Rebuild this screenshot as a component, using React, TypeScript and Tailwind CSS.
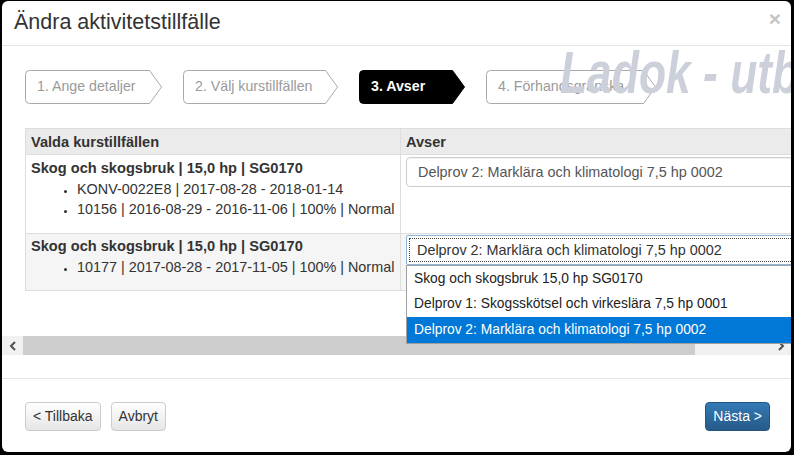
import React from "react";

const font = { fontFamily: '"Liberation Sans", Arial, sans-serif' };

interface StepProps {
  label: string;
  width: number;
  active?: boolean;
}

function Step({ label, width, active }: StepProps) {
  const h = 34;
  const d = `M4.5,0.5 H${width - 12.5} L${width - 0.5},${h / 2} L${width - 12.5},${h - 0.5} H4.5 Q0.5,${h - 0.5} 0.5,${h - 4.5} V4.5 Q0.5,0.5 4.5,0.5 Z`;
  return (
    <div className="relative h-[34px] flex items-center pl-[12px]" style={{ width }}>
      <svg className="absolute inset-0" width={width} height={h}>
        <path d={d} fill={active ? "#000" : "#fff"} stroke={active ? "#000" : "#a9a9a9"} strokeWidth="1" />
      </svg>
      <span className={active ? "relative text-[14.2px] font-bold text-white" : "relative text-[14.2px] text-[#9a9a9a]"}>{label}</span>
    </div>
  );
}

function Btn({ children, primary }: { children: React.ReactNode; primary?: boolean }) {
  if (primary) {
    return (
      <button className="h-[29px] px-[7px] rounded-[4px] border border-[#245580] bg-gradient-to-b from-[#337ab7] to-[#265a88] text-white text-[14px]">
        {children}
      </button>
    );
  }
  return (
    <button className="h-[29px] px-[7px] rounded-[4px] border border-[#ccc] bg-gradient-to-b from-white to-[#e6e6e6] text-[#333] text-[14px]">
      {children}
    </button>
  );
}

export default function App() {
  return (
    <div className="w-[794px] h-[455px] bg-black pt-[1px] pl-[2px] pr-[3px] pb-[3px]" style={font}>
      <div className="relative w-full h-[451px] bg-white rounded-[6px] overflow-hidden flex flex-col text-[#333]">
        {/* header */}
        <div className="h-[45px] shrink-0 border-b border-[#e5e5e5] flex items-center justify-between pl-[12px] pr-[10px]">
          <h4 className="text-[21.5px] leading-none text-[#333]">Ändra aktivitetstillfälle</h4>
          <span className="text-[21px] font-bold text-[#c4c4c4] leading-none -mt-[9px]">×</span>
        </div>

        {/* body */}
        <div className="relative shrink-0">
          <div className="absolute left-[558px] top-[-3px] text-[60px] leading-none font-bold italic text-[#cbd0da] whitespace-nowrap origin-left scale-x-[0.74] z-10 pointer-events-none">
            Ladok - utb
          </div>

          <div className="flex items-center pl-[23px] pt-[24px] gap-[21px]">
            <Step label="1. Ange detaljer" width={137} />
            <Step label="2. Välj kurstillfällen" width={155} />
            <Step label="3. Avser" width={106} active />
            <Step label="4. Förhandsgranska" width={170} />
          </div>

          {/* table */}
          <div className="ml-[23px] mt-[24px] w-[920px] text-[14.4px] leading-[20.5px]">
            <div className="flex h-[26px] bg-[#ebebeb] border-t border-l border-[#ddd] font-bold text-[14.6px]">
              <div className="w-[375px] px-[5px] pt-[3px] border-r border-[#ddd]">Valda kurstillfällen</div>
              <div className="flex-1 px-[5px] pt-[3px]">Avser</div>
            </div>

            <div className="flex h-[79px] border-t border-l border-[#ddd] bg-white">
              <div className="w-[375px] px-[5px] pt-[3px] border-r border-[#ddd]">
                <div className="font-bold text-[14.6px]">Skog och skogsbruk | 15,0 hp | SG0170</div>
                <ul className="list-disc pl-[46px] marker:text-[11px]">
                  <li>KONV-0022E8 | 2017-08-28 - 2018-01-14</li>
                  <li>10156 | 2016-08-29 - 2016-11-06 | 100% | Normal</li>
                </ul>
              </div>
              <div className="flex-1 px-[5px] pt-[2px]">
                <div className="h-[30px] border border-[#ccc] rounded-[4px] flex items-center pl-[11px] text-[#555] shadow-[inset_0_1px_1px_rgba(0,0,0,0.05)]">
                  Delprov 2: Marklära och klimatologi 7,5 hp 0002
                </div>
              </div>
            </div>

            <div className="flex h-[58px] border-t border-b border-l border-[#ddd] bg-[#f5f5f5]">
              <div className="w-[375px] px-[5px] pt-[2px] border-r border-[#ddd]">
                <div className="font-bold text-[14.6px]">Skog och skogsbruk | 15,0 hp | SG0170</div>
                <ul className="list-disc pl-[46px] marker:text-[11px]">
                  <li>10177 | 2017-08-28 - 2017-11-05 | 100% | Normal</li>
                </ul>
              </div>
              <div className="relative flex-1 px-[5px] pt-[1px]">
                <div className="h-[30px] border border-[#8fb6d8] rounded-[2px] bg-white flex items-center px-[2px]">
                  <div className="h-[24px] flex-1 border border-dotted border-[#444] flex items-center pl-[7px] text-[#333]">
                    Delprov 2: Marklära och klimatologi 7,5 hp 0002
                  </div>
                </div>
                <div className="absolute left-[5px] right-[5px] top-[31px] z-20 bg-white border border-[#a0a0a0] text-[13.8px] text-[#222]">
                  <div className="h-[26px] flex items-center pl-[7px]">Skog och skogsbruk 15,0 hp SG0170</div>
                  <div className="h-[25px] flex items-center pl-[7px]">Delprov 1: Skogsskötsel och virkeslära 7,5 hp 0001</div>
                  <div className="h-[26px] flex items-center pl-[7px] bg-[#0078d7] text-white">Delprov 2: Marklära och klimatologi 7,5 hp 0002</div>
                </div>
              </div>
            </div>
          </div>

          {/* horizontal scrollbar */}
          <div className="mt-[45px] h-[19px] flex bg-[#f1f1f1]">
            <div className="w-[21px] flex items-center justify-center">
              <svg width="8" height="10" viewBox="0 0 8 10">
                <path d="M6 1 L2 5 L6 9" fill="none" stroke="#505050" strokeWidth="2" />
              </svg>
            </div>
            <div className="w-[672px] bg-[#cdcdcd]" />
            <div className="flex-1" />
            <div className="w-[20px] flex items-center justify-center">
              <svg width="8" height="10" viewBox="0 0 8 10">
                <path d="M2 1 L6 5 L2 9" fill="none" stroke="#505050" strokeWidth="2" />
              </svg>
            </div>
          </div>
        </div>

        {/* footer */}
        <div className="mt-[23px] border-t border-[#e5e5e5] flex items-center justify-between pt-[23px] pl-[23px] pr-[21px]">
          <div className="flex gap-[10px]">
            <Btn>&lt; Tillbaka</Btn>
            <Btn>Avbryt</Btn>
          </div>
          <Btn primary>Nästa &gt;</Btn>
        </div>
      </div>
    </div>
  );
}
